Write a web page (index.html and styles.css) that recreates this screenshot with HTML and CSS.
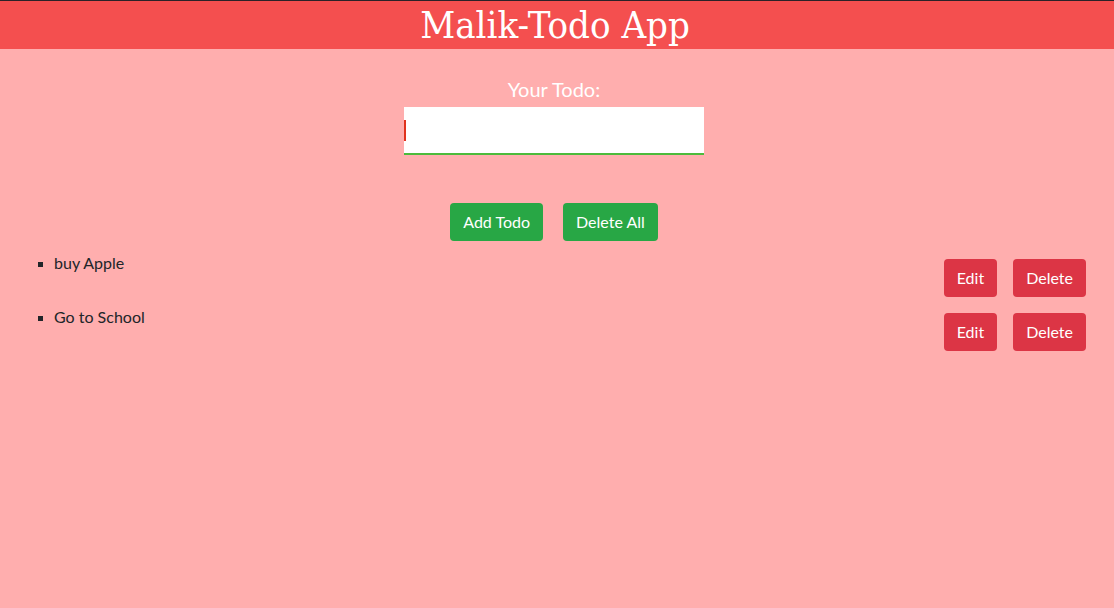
FILE: index.html
```html
<!DOCTYPE html>
<html>
<head>
<meta charset="utf-8">
<title>Malik-Todo App</title>
<link rel="stylesheet" href="styles.css">
</head>
<body>
<header class="topbar">
  <h1 class="title">Malik-Todo App</h1>
</header>
<main class="main">
  <section class="entry">
    <label class="entry-label" for="todo">Your Todo:</label>
    <div class="entry-box"><span class="caret"></span><input id="todo" class="entry-input" type="text"></div>
  </section>
  <div class="actions">
    <button class="btn btn-green">Add Todo</button>
    <button class="btn btn-green">Delete All</button>
  </div>
  <ul class="todos">
    <li class="todo">
      <div class="todo-row">
        <span class="todo-text">buy Apple</span>
        <div class="todo-btns">
          <button class="btn btn-red">Edit</button>
          <button class="btn btn-red">Delete</button>
        </div>
      </div>
    </li>
    <li class="todo">
      <div class="todo-row">
        <span class="todo-text">Go to School</span>
        <div class="todo-btns">
          <button class="btn btn-red">Edit</button>
          <button class="btn btn-red">Delete</button>
        </div>
      </div>
    </li>
  </ul>
</main>
</body>
</html>
```
FILE: styles.css
```css
html, body {
  margin: 0;
  padding: 0;
}
body {
  background: #ffaeae;
  font-family: "Lato", "Open Sans", sans-serif;
  color: #212529;
  min-height: 608px;
}
.topbar {
  background: #f44f4f;
  border-top: 1px solid #2b2228;
  height: 48px;
  display: flex;
  align-items: center;
  justify-content: center;
}
.title {
  margin: 0;
  font-family: "DejaVu Serif Condensed", "DejaVu Serif", serif;
  font-stretch: condensed;
  font-weight: normal;
  font-size: 38px;
  color: #ffffff;
  line-height: 48px;
  padding-right: 4px;
}
.main {
  display: flex;
  flex-direction: column;
}
.entry {
  display: flex;
  flex-direction: column;
  align-items: center;
  padding-top: 28px;
  padding-right: 6px;
}
.entry-label {
  color: #ffffff;
  font-size: 20px;
  line-height: 24px;
  margin-bottom: 6px;
}
.entry-box {
  position: relative;
  width: 300px;
  height: 46px;
  background: #ffffff;
  border-bottom: 2px solid #4cbb3c;
}
.caret {
  position: absolute;
  left: 0;
  top: 13px;
  width: 2px;
  height: 21px;
  background: #e0321e;
}
.entry-input {
  width: 100%;
  height: 100%;
  border: 0;
  outline: none;
  background: transparent;
  box-sizing: border-box;
  padding: 0 8px;
  font-size: 16px;
}
.actions {
  display: flex;
  justify-content: center;
  gap: 20px;
  margin-top: 48px;
  padding-right: 6px;
}
.btn {
  font-family: "Lato", "Open Sans", sans-serif;
  font-size: 16px;
  line-height: 24px;
  padding: 7px 13px;
  border: 0;
  border-radius: 4px;
  color: #ffffff;
  cursor: pointer;
}
.btn-green {
  background: #28a745;
  padding: 7px 13px;
}
.btn-red {
  background: #dc3545;
}
.todos {
  list-style: square;
  margin: 11px 0 0 0;
  padding: 0 28px 0 54px;
}
.todo {
  height: 54px;
}
.todo::marker {
  font-size: 14px;
  color: #212529;
}
.todo-row {
  display: flex;
  justify-content: space-between;
  align-items: flex-start;
}
.todo-text {
  font-size: 16px;
  line-height: 24px;
  margin-top: -1px;
}
.todo-btns {
  display: flex;
  gap: 16px;
  margin-top: 7px;
}
```
